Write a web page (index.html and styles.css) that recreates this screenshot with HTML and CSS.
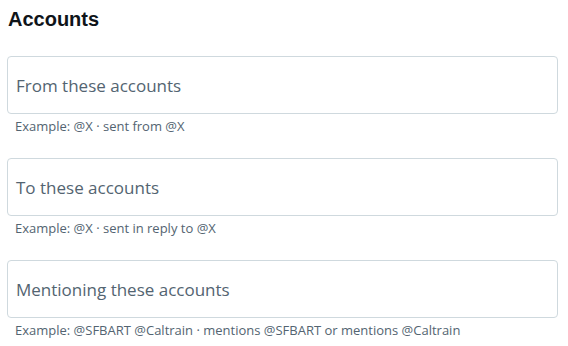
FILE: index.html
```html
<!DOCTYPE html>
<html>
<head>
<meta charset="utf-8">
<link rel="stylesheet" href="styles.css">
</head>
<body>
<div class="section">
  <h2 class="title">Accounts</h2>
  <div class="fields">
    <div class="field">
      <div class="input"><span class="placeholder">From these accounts</span></div>
      <div class="hint">Example: @X · sent from @X</div>
    </div>
    <div class="field">
      <div class="input"><span class="placeholder">To these accounts</span></div>
      <div class="hint">Example: @X · sent in reply to @X</div>
    </div>
    <div class="field">
      <div class="input"><span class="placeholder">Mentioning these accounts</span></div>
      <div class="hint">Example: @SFBART @Caltrain · mentions @SFBART or mentions @Caltrain</div>
    </div>
  </div>
</div>
</body>
</html>
```
FILE: styles.css
```css
html, body {
  margin: 0;
  padding: 0;
  background: #ffffff;
}
.section {
  padding: 6px 10px 0 7px;
  font-family: "Open Sans", "Liberation Sans", sans-serif;
  color: #0f1419;
}
.title {
  margin: 0 0 0 1px;
  font-family: "Liberation Sans", Arial, sans-serif;
  font-weight: bold;
  font-size: 20px;
  line-height: 26px;
  height: 24px;
  color: #0f1419;
}
.fields {
  margin-top: 26px;
  display: flex;
  flex-direction: column;
  gap: 24px;
}
.field {
  display: flex;
  flex-direction: column;
}
.input {
  height: 56px;
  border: 1px solid #cfd9de;
  border-radius: 4px;
  display: flex;
  align-items: center;
  padding: 0 8px;
}
.placeholder {
  font-size: 17px;
  color: #536471;
}
.hint {
  margin-top: 4px;
  padding-left: 8px;
  font-size: 13px;
  line-height: 16px;
  color: #536471;
}
```
